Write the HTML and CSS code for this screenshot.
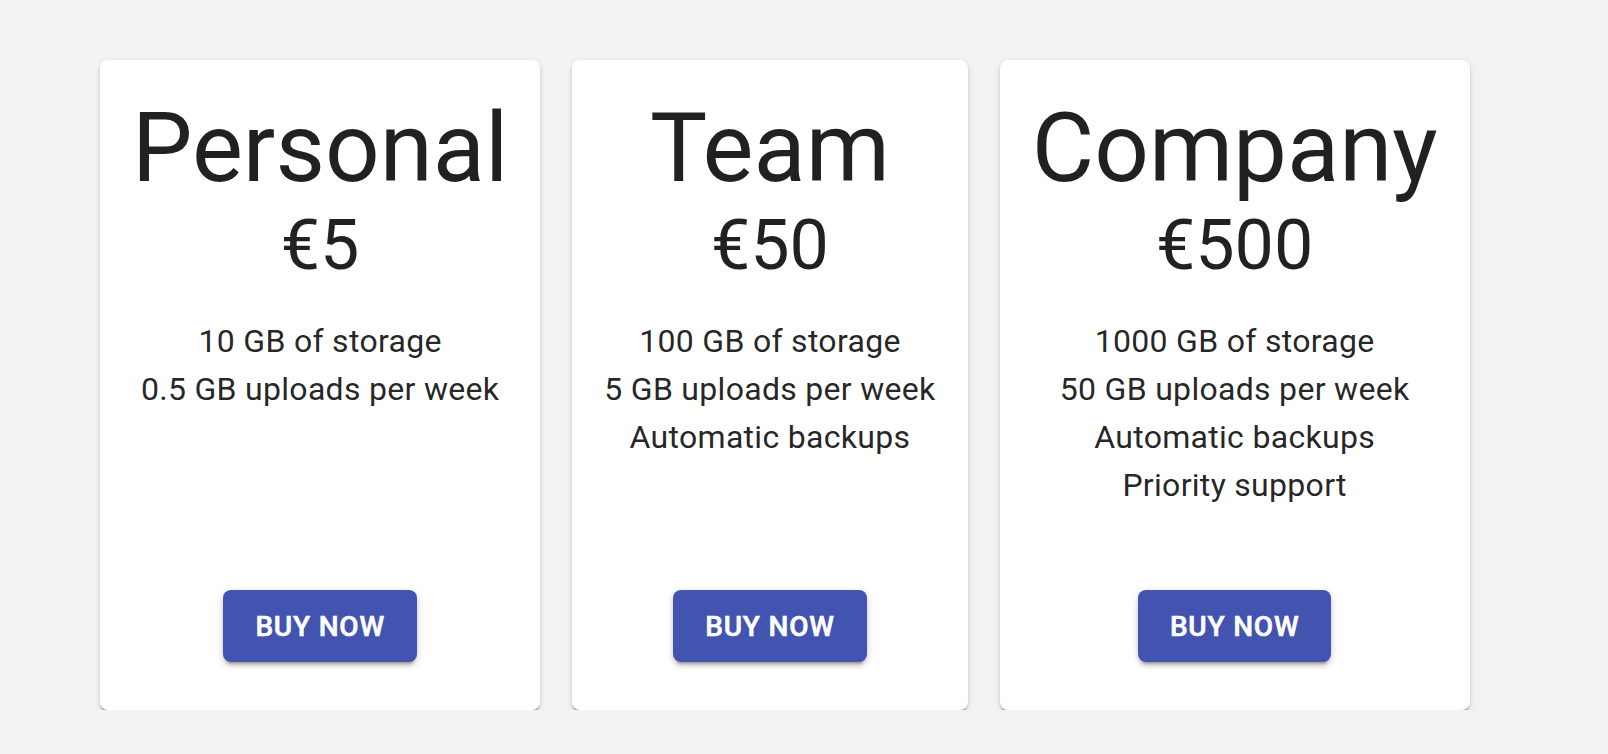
FILE: index.html
```html
<!DOCTYPE html>
<html lang="en">
<head>
<meta charset="utf-8">
<title>Pricing</title>
<link rel="stylesheet" href="styles.css">
</head>
<body>
<div class="plans">
  <div class="card">
    <h1 class="title">Personal</h1>
    <div class="price">€5</div>
    <ul class="features">
      <li>10 GB of storage</li>
      <li>0.5 GB uploads per week</li>
    </ul>
    <button class="buy">Buy now</button>
  </div>
  <div class="card">
    <h1 class="title">Team</h1>
    <div class="price">€50</div>
    <ul class="features">
      <li>100 GB of storage</li>
      <li>5 GB uploads per week</li>
      <li>Automatic backups</li>
    </ul>
    <button class="buy">Buy now</button>
  </div>
  <div class="card">
    <h1 class="title">Company</h1>
    <div class="price">€500</div>
    <ul class="features">
      <li>1000 GB of storage</li>
      <li>50 GB uploads per week</li>
      <li>Automatic backups</li>
      <li>Priority support</li>
    </ul>
    <button class="buy">Buy now</button>
  </div>
</div>
</body>
</html>
```

FILE: styles.css
```css
html, body {
  margin: 0;
  padding: 0;
}
body {
  background: #f2f2f2;
  font-family: Roboto, "Liberation Sans", sans-serif;
  color: rgba(0, 0, 0, 0.87);
}
.plans {
  display: flex;
  align-items: stretch;
  gap: 32px;
  padding: 60px 0 0 100px;
}
.card {
  background: #fff;
  border-radius: 8px;
  box-shadow: 0 4px 2px -2px rgba(0,0,0,0.28), 0 2px 2px 0 rgba(0,0,0,0.14), 0 2px 6px 0 rgba(0,0,0,0.12);
  height: 650px;
  box-sizing: border-box;
  padding: 32px 32px 48px;
  display: flex;
  flex-direction: column;
  align-items: center;
  text-align: center;
}
.title {
  margin: 0;
  font-size: 96px;
  font-weight: 400;
  line-height: normal;
}
.price {
  font-size: 70px;
  line-height: normal;
}
.features {
  list-style: none;
  margin: 31px 0 0;
  padding: 0;
  font-size: 32px;
  letter-spacing: 0.3px;
  line-height: 48px;
}
.buy {
  margin-top: auto;
  height: 72px;
  padding: 0 32px;
  border: none;
  border-radius: 8px;
  background: #4353b0;
  color: #fff;
  font-family: Roboto, "Liberation Sans", sans-serif;
  font-size: 28px;
  font-weight: 500;
  letter-spacing: 0.8px;
  text-transform: uppercase;
  -webkit-text-stroke: 0.6px #fff;
  box-shadow: 0 6px 2px -4px rgba(0,0,0,0.2), 0 4px 4px 0 rgba(0,0,0,0.14), 0 2px 10px 0 rgba(0,0,0,0.12);
  cursor: pointer;
}
```
